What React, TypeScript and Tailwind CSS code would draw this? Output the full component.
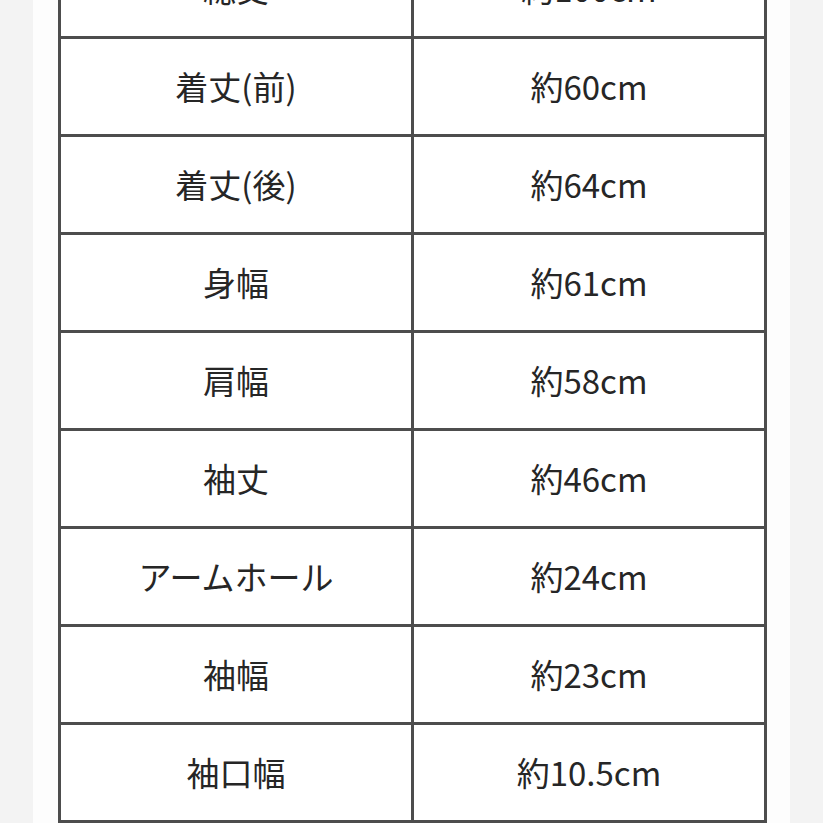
const rows: [string, string][] = [
  ['総丈', '約100cm'],
  ['着丈(前)', '約60cm'],
  ['着丈(後)', '約64cm'],
  ['身幅', '約61cm'],
  ['肩幅', '約58cm'],
  ['袖丈', '約46cm'],
  ['アームホール', '約24cm'],
  ['袖幅', '約23cm'],
  ['袖口幅', '約10.5cm'],
];

export default function App() {
  return (
    <div
      className="h-[823px] w-[823px] overflow-hidden bg-[#f3f3f3]"
      style={{ fontFamily: '"Noto Sans CJK JP", "Noto Sans", sans-serif' }}
    >
      <div className="ml-[33px] flex h-full w-[757px] flex-col bg-[#fdfdfd] pl-[25px]">
        <div className="-mt-[62px] w-[709px] shrink-0 border-x-[3px] border-t-[3px] border-[#4d4d4d] bg-white">
          {rows.map(([label, value]) => (
            <div key={label} className="flex h-[98px] border-b-[3px] border-[#4d4d4d]">
              <div className="flex w-[350px] items-center justify-center text-[33px] text-[#262626]">
                {label}
              </div>
              <div className="w-[3px] bg-[#4d4d4d]" />
              <div className="flex flex-1 items-center justify-center text-[33px] text-[#262626]">
                {value}
              </div>
            </div>
          ))}
        </div>
      </div>
    </div>
  );
}
